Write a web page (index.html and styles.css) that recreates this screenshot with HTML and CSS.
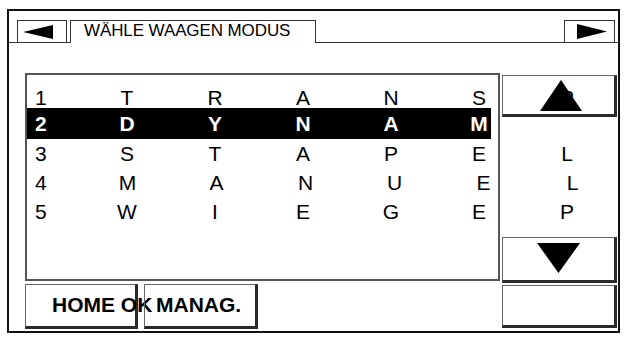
FILE: index.html
```html
<!DOCTYPE html>
<html>
<head>
<meta charset="utf-8">
<link rel="stylesheet" href="styles.css">
</head>
<body>
<div class="frame">
  <div class="tabbar">
    <div class="arrow-btn left-btn"><svg width="30" height="14" viewBox="0 0 30 14"><polygon points="0,7 30,0 30,14"/></svg></div>
    <div class="tab">WÄHLE WAAGEN MODUS</div>
    <div class="arrow-btn right-btn"><svg width="30" height="15" viewBox="0 0 30 15"><polygon points="30,7.5 0,0 0,15"/></svg></div>
  </div>
  <div class="main">
    <div class="list">
      <div class="row r1"><span class="num">1</span><span>T</span><span>R</span><span>A</span><span>N</span><span>S</span><span>P</span></div>
      <div class="row r2"><span class="num">2</span><span>D</span><span>Y</span><span>N</span><span>A</span><span>M</span></div>
      <div class="row r3"><span class="num">3</span><span>S</span><span>T</span><span>A</span><span>P</span><span>E</span><span>L</span></div>
      <div class="row r4"><span class="num">4</span><span>M</span><span>A</span><span>N</span><span>U</span><span>E</span><span>L</span></div>
      <div class="row r5"><span class="num">5</span><span>W</span><span>I</span><span>E</span><span>G</span><span>E</span><span>P</span></div>
    </div>
    <div class="side">
      <div class="btn up"><svg width="42" height="31" viewBox="0 0 42 31"><polygon points="21,0 42,31 0,31"/></svg></div>
      <div class="btn down"><svg width="43" height="30" viewBox="0 0 43 30"><polygon points="0,0 43,0 21.5,30"/></svg></div>
    </div>
    <div class="bottom-left">
      <div class="btn home">HOME OK</div>
      <div class="btn manag">MANAG.</div>
    </div>
    <div class="btn blank"></div>
  </div>
</div>
</body>
</html>
```
FILE: styles.css
```css
body {
  margin: 0;
  background: #fff;
  font-family: "Liberation Sans", Arial, Helvetica, sans-serif;
  color: #000;
}

.frame {
  margin: 9px 0 0 7px;
  width: 613px;
  height: 324px;
  border: 2px solid #111;
  box-sizing: border-box;
}

.tabbar {
  display: flex;
  align-items: flex-start;
  height: 32px;
  box-sizing: border-box;
  padding-top: 9px;
  border-bottom: 1px solid #333;
}

.arrow-btn {
  height: 22px;
  box-sizing: border-box;
  border: 1px solid #333;
  border-bottom: none;
  display: flex;
  align-items: center;
}

.left-btn {
  margin-left: 8px;
  width: 50px;
  padding-left: 5px;
}

.right-btn {
  margin-left: auto;
  margin-right: 3px;
  width: 51px;
  justify-content: flex-end;
  padding-right: 7px;
}

.tab {
  margin-left: 3px;
  width: 246px;
  height: 23px;
  margin-bottom: -1px;
  box-sizing: border-box;
  background: #fff;
  border: 1px solid #333;
  border-bottom: none;
  padding-left: 13px;
  font-size: 17px;
  line-height: 19px;
  letter-spacing: -0.1px;
  white-space: nowrap;
}

.main {
  display: grid;
  grid-template-columns: 475px 115px;
  grid-template-rows: 208px 45px;
  column-gap: 2px;
  row-gap: 3px;
  margin: 30px 0 0 16px;
}

.list {
  grid-column: 1;
  grid-row: 1;
  border: 2px solid #555;
  box-sizing: border-box;
  padding-top: 13px;
}

.row {
  display: flex;
  font-size: 21px;
  white-space: nowrap;
}

.row span {
  flex: 0 0 88px;
  text-align: center;
}

.row .num {
  flex: 0 0 56px;
  text-align: left;
  padding-left: 8px;
  box-sizing: border-box;
}

.r1 { line-height: 20px; }

.r2 {
  line-height: 31px;
  width: 464px;
  background: #000;
  color: #fff;
  font-weight: bold;
}

.r3, .r4, .r5 { line-height: 29px; }

.r4 span:not(.num) { flex-basis: 89px; }

.btn {
  box-sizing: border-box;
  border-top: 1px solid #666;
  border-left: 1px solid #666;
  border-right: 3px solid #2a2a2a;
  border-bottom: 3px solid #2a2a2a;
  background: transparent;
}

.side {
  grid-column: 2;
  grid-row: 1;
  display: flex;
  flex-direction: column;
  justify-content: space-between;
  margin: 2px 0 -2px;
}

.up {
  height: 42px;
  display: flex;
  justify-content: center;
  padding-top: 4px;
  padding-left: 4px;
}

.down {
  height: 46px;
  display: flex;
  justify-content: center;
  padding-top: 5px;
}

.bottom-left {
  grid-column: 1;
  grid-row: 2;
  display: flex;
  gap: 6px;
}

.home, .manag {
  height: 45px;
  display: flex;
  align-items: center;
  padding-bottom: 2px;
  font-weight: bold;
  font-size: 21px;
  white-space: nowrap;
}

.home {
  width: 113px;
  padding-left: 26px;
}

.manag {
  width: 114px;
  padding-left: 11px;
}

.blank {
  grid-column: 2;
  grid-row: 2;
  margin-top: 1px;
  height: 43px;
}
```
